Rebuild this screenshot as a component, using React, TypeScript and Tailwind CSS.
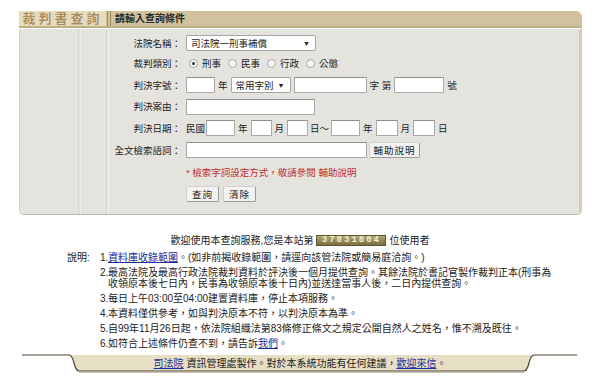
import React from 'react'

const font = { fontFamily: '"Liberation Sans", "Noto Sans CJK TC", sans-serif' }

function TextBox({ w }: { w: number }) {
  return (
    <span
      className="inline-block h-[16px] bg-white border border-[#a9a9a9] border-t-[#8f8f8f] rounded-[1px]"
      style={{ width: w }}
    />
  )
}

function FakeSelect({ w, text }: { w: number; text: string }) {
  return (
    <span
      className="inline-flex items-center justify-between h-[16px] bg-white border border-[#a5a5a5] rounded-[2px] pl-[4px] pr-[5px] text-[#222]"
      style={{ width: w }}
    >
      <span>{text}</span>
      <span className="text-[7px] leading-none">▼</span>
    </span>
  )
}

function Radio({ checked, label }: { checked?: boolean; label: string }) {
  return (
    <span className="inline-flex items-center mr-[7px]">
      <span className="w-[9px] h-[9px] rounded-full border border-[#a6a6a6] bg-[#f4f4f4] flex items-center justify-center mr-[4px]">
        {checked && <span className="w-[3px] h-[3px] rounded-full bg-[#333]" />}
      </span>
      <span>{label}</span>
    </span>
  )
}

function Btn({ children, w }: { children: React.ReactNode; w: number }) {
  return (
    <span
      className="inline-flex items-center justify-center h-[16px] bg-[#f2f2f0] border border-[#9a9a9a] border-t-[#d0d0d0] border-l-[#d0d0d0] rounded-[2px] text-[#222] tracking-[1px]"
      style={{ width: w }}
    >
      {children}
    </span>
  )
}

function Row({ label, h, children }: { label: string; h: number; children?: React.ReactNode }) {
  return (
    <div className="flex items-center" style={{ height: h }}>
      <div className="w-[166px] pr-[5px] text-right text-[#222]">{label}</div>
      <div className="flex items-center">{children}</div>
    </div>
  )
}

const notes: React.ReactNode[] = [
  <>
    <a className="text-[#1a2f9a] underline">資料庫收錄範圍</a>。(如非前揭收錄範圍，請逕向該管法院或簡易庭洽詢。)
  </>,
  <>
    最高法院及最高行政法院裁判資料於評決後一個月提供查詢。其餘法院於書記官製作裁判正本(刑事為
    <br />
    收領原本後七日內，民事為收領原本後十日內)並送達當事人後，二日內提供查詢。
  </>,
  <>每日上午03:00至04:00建置資料庫，停止本項服務。</>,
  <>本資料僅供參考，如與判決原本不符，以判決原本為準。</>,
  <>自99年11月26日起，依法院組織法第83條修正條文之規定公開自然人之姓名，惟不溯及既往。</>,
  <>
    如符合上述條件仍查不到，請告訴<a className="text-[#1a2f9a] underline">我們</a>。
  </>,
]

export default function App() {
  return (
    <div className="w-[600px] h-[389px] bg-white text-[10px] leading-[11px] text-[#222] overflow-hidden" style={font}>
      <div className="pt-[11px] pl-[19px] w-[582px]">
        {/* header */}
        <div className="flex h-[17px] bg-[#cfc29c] rounded-tr-[6px] border-b-[2px] border-[#bfae82]">
          <div className="w-[87px] bg-[#e6dcbc] flex items-center justify-center">
            <span className="text-[13px] font-bold tracking-[3px] text-[#a88c5c] [text-shadow:0_0_1px_#fff]">裁判書查詢</span>
          </div>
          <div className="w-[1px] bg-[#9c8a5c] ml-[1px]" />
          <div className="w-[1px] bg-[#9c8a5c] ml-[2px]" />
          <div className="flex items-center pl-[4px] font-bold text-[#2a2a2a]">請輸入查詢條件</div>
        </div>
        {/* body */}
        <div className="relative mt-[1px] bg-[#e5e3de] text-[9.5px] border-r-[3px] border-r-[#d8ccaa] border-b border-b-[#b9b6ae] border-l border-l-[#d2d0ca] rounded-bl-[5px] rounded-br-[5px] pt-[5px] pb-[9px]">
          <div className="absolute top-0 bottom-0 left-[58px] w-[1px] bg-[#d6d4ce]" />
          <div className="absolute top-0 bottom-0 left-[60px] w-[1px] bg-[#f1f0ec]" />
          <div className="absolute top-0 bottom-0 left-[86px] w-[1px] bg-[#d6d4ce]" />
          <div className="absolute top-0 bottom-0 left-[88px] w-[1px] bg-[#f1f0ec]" />
          <div className="relative">
            <Row label="法院名稱：" h={18}>
              <FakeSelect w={130} text="司法院一刑事補償" />
            </Row>
            <Row label="裁判類別：" h={22}>
              <span className="ml-[3px] flex items-center">
                <Radio checked label="刑事" />
                <Radio label="民事" />
                <Radio label="行政" />
                <Radio label="公懲" />
              </span>
            </Row>
            <Row label="判決字號：" h={22}>
              <TextBox w={29} />
              <span className="mx-[3px]">年</span>
              <FakeSelect w={60} text="常用字別" />
              <span className="ml-[3px]" />
              <TextBox w={73} />
              <span className="mx-[3px]">字 第</span>
              <TextBox w={50} />
              <span className="ml-[3px]">號</span>
            </Row>
            <Row label="判決案由：" h={21}>
              <TextBox w={129} />
            </Row>
            <Row label="判決日期：" h={22}>
              <span className="mr-[1px]">民國</span>
              <TextBox w={29} />
              <span className="mx-[3px]">年</span>
              <TextBox w={21} />
              <span className="mx-[3px]">月</span>
              <TextBox w={21} />
              <span className="mx-[2px]">日～</span>
              <TextBox w={29} />
              <span className="mx-[3px]">年</span>
              <TextBox w={22} />
              <span className="mx-[3px]">月</span>
              <TextBox w={22} />
              <span className="ml-[3px]">日</span>
            </Row>
            <Row label="全文檢索語詞：" h={22}>
              <TextBox w={181} />
              <span className="ml-[2px]">
                <Btn w={51}>輔助說明</Btn>
              </span>
            </Row>
            <Row label="" h={22}>
              <span className="text-[#c0302c]">* 檢索字詞設定方式，敬請參閱 輔助說明</span>
            </Row>
            <Row label="" h={22}>
              <Btn w={33}>查詢</Btn>
              <span className="ml-[4px]">
                <Btn w={33}>清除</Btn>
              </span>
            </Row>
          </div>
        </div>
      </div>

      {/* welcome */}
      <div className="mt-[20px] flex justify-center items-center">
        <span>歡迎使用本查詢服務,您是本站第</span>
        <span className="mx-[3px] h-[11px] w-[70px] flex items-center justify-center bg-gradient-to-b from-[#b2a777] to-[#7a6f42] border border-[#5e5430] text-[#f5efd2] font-bold tracking-[2px] text-[9px] [font-family:'Liberation_Mono',monospace]">
          37831804
        </span>
        <span>位使用者</span>
      </div>

      {/* notes */}
      <div className="mt-[6px] flex pl-[67px]">
        <div className="w-[33px]">說明:</div>
        <ol className="flex flex-col gap-[4px]">
          {notes.map((n, i) => (
            <li key={i} className="flex">
              <span className="w-[8px]">{i + 1}.</span>
              <span>{n}</span>
            </li>
          ))}
        </ol>
      </div>

      {/* footer */}
      <div className="relative mt-[4px] ml-[19px] w-[562px] h-[21px] flex items-center justify-center">
        <svg className="absolute inset-0" width="562" height="21" viewBox="0 0 562 21">
          <path d="M50 2 C56 2 54 18 60 18 L505 18 C511 18 509 2 515 2 Z" fill="#e6dec5" />
          <path
            d="M3 2 L50 2 C56 2 54 18 60 18 L505 18 C511 18 509 2 515 2 L558 2"
            fill="none"
            stroke="#4d4030"
            strokeWidth="1.2"
          />
          <path d="M60 19.5 L505 19.5" stroke="#c9c3b3" strokeWidth="1" />
        </svg>
        <span className="relative -mt-[1px]">
          <a className="text-[#1a2f9a] underline">司法院</a> 資訊管理處製作。對於本系統功能有任何建議，
          <a className="text-[#1a2f9a] underline">歡迎來信</a>。
        </span>
      </div>
    </div>
  )
}
